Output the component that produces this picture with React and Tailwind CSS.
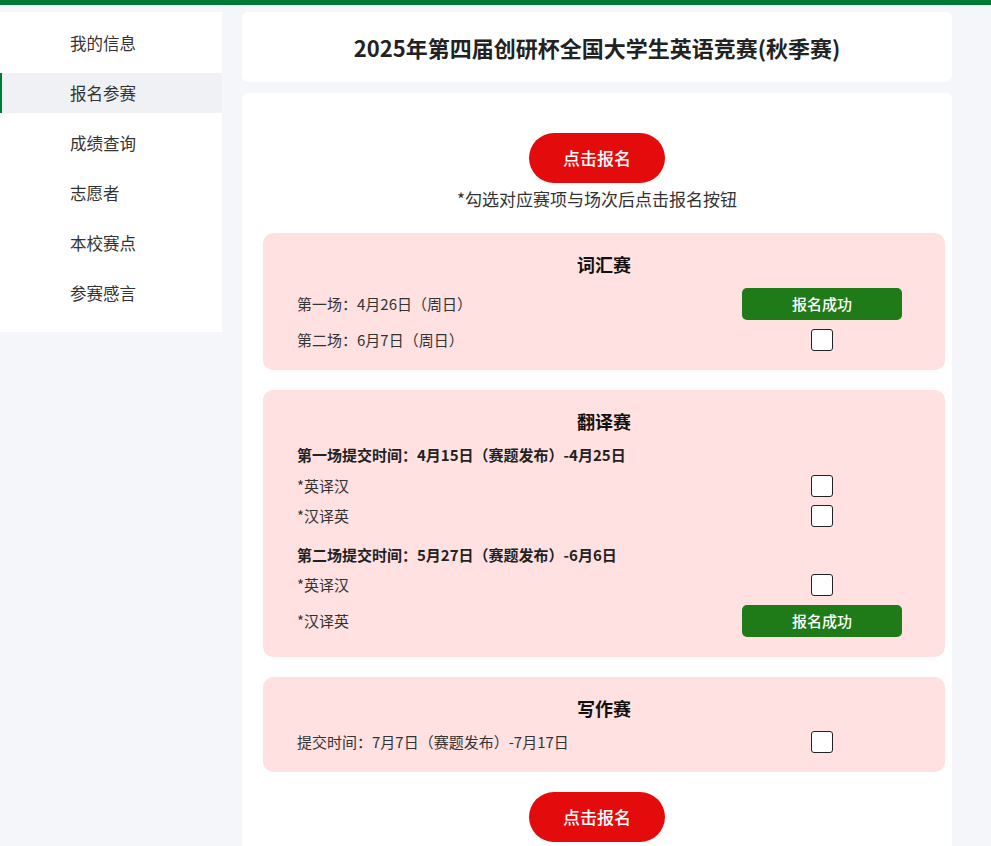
import React from "react";

const font = { fontFamily: '"Noto Sans CJK SC", "Noto Sans", sans-serif' };

function Checkbox() {
  return <span className="block w-[22px] h-[22px] rounded-[3px] border border-[#222] bg-white" />;
}

function Done() {
  return (
    <span className="flex items-center justify-center w-[160px] h-[32px] rounded-[5px] bg-[#1e7b18] text-white text-[15px] font-medium">
      报名成功
    </span>
  );
}

function Row({ label, right, h = "h-[32px]", bold = false }) {
  return (
    <div className={`flex items-center justify-between ${h}`}>
      <span className={`text-[15px] ${bold ? "font-bold text-[#222]" : "text-[#333]"}`}>{label}</span>
      <div className="w-[160px] flex justify-center">{right}</div>
    </div>
  );
}

function Section({ title, children, className = "" }) {
  return (
    <div className={`ml-[21px] mr-[7px] rounded-[10px] bg-[#ffe1e1] pt-[18px] ${className}`}>
      <div className="text-center text-[18px] leading-[26px] font-bold text-[#111]">{title}</div>
      <div className="pl-[34px] pr-[43px]">{children}</div>
    </div>
  );
}

function RedButton({ className = "" }) {
  return (
    <div className={`flex justify-center ${className}`}>
      <button className="w-[136px] h-[50px] rounded-full bg-[#e30b0b] text-white text-[17px] font-medium">
        点击报名
      </button>
    </div>
  );
}

export default function App() {
  const nav = ["我的信息", "报名参赛", "成绩查询", "志愿者", "本校赛点", "参赛感言"];
  return (
    <div style={font} className="min-h-[846px] bg-[#f5f6fa] text-[#333]">
      <div className="h-[5px] bg-[#007a37]" />
      <div className="flex items-start pt-[7px]">
        <div className="w-[222px] bg-white pt-[11px] pb-[19px] flex flex-col gap-[10px]">
          {nav.map((n, i) => (
            <div
              key={n}
              className={`h-[40px] flex items-center text-[16.5px] ${
                i === 1 ? "bg-[#f0f1f5] border-l-2 border-[#007a37] pl-[68px]" : "pl-[70px]"
              }`}
            >
              {n}
            </div>
          ))}
        </div>
        <div className="ml-[20px] w-[710px] flex flex-col gap-[11px]">
          <div className="h-[70px] bg-white rounded-md flex items-center justify-center text-[22px] font-bold text-[#222]">
            2025年第四届创研杯全国大学生英语竞赛(秋季赛)
          </div>
          <div className="bg-white rounded-md pt-[40px] pb-[20px]">
            <RedButton />
            <div className="mt-[4px] text-center text-[17px] leading-[24px] text-[#333]">*勾选对应赛项与场次后点击报名按钮</div>

            <Section title="词汇赛" className="mt-[22px] pb-[14px]">
              <div className="mt-[11px] flex flex-col gap-[4px]">
                <Row label="第一场：4月26日（周日）" right={<Done />} />
                <Row label="第二场：6月7日（周日）" right={<Checkbox />} />
              </div>
            </Section>

            <Section title="翻译赛" className="mt-[20px] pb-[20px]">
              <div className="mt-[10px] text-[15px] leading-[22px] font-bold text-[#222]">
                第一场提交时间：4月15日（赛题发布）-4月25日
              </div>
              <div className="mt-[5px]">
                <Row label="*英译汉" right={<Checkbox />} h="h-[30px]" />
                <Row label="*汉译英" right={<Checkbox />} h="h-[30px]" />
              </div>
              <div className="mt-[13px] text-[15px] leading-[22px] font-bold text-[#222]">
                第二场提交时间：5月27日（赛题发布）-6月6日
              </div>
              <div className="mt-[4px]">
                <Row label="*英译汉" right={<Checkbox />} h="h-[30px]" />
                <div className="mt-[5px]">
                  <Row label="*汉译英" right={<Done />} />
                </div>
              </div>
            </Section>

            <Section title="写作赛" className="mt-[20px] pb-[14px]">
              <div className="mt-[5px]">
                <Row label="提交时间：7月7日（赛题发布）-7月17日" right={<Checkbox />} />
              </div>
            </Section>

            <RedButton className="mt-[20px]" />
          </div>
        </div>
      </div>
    </div>
  );
}
